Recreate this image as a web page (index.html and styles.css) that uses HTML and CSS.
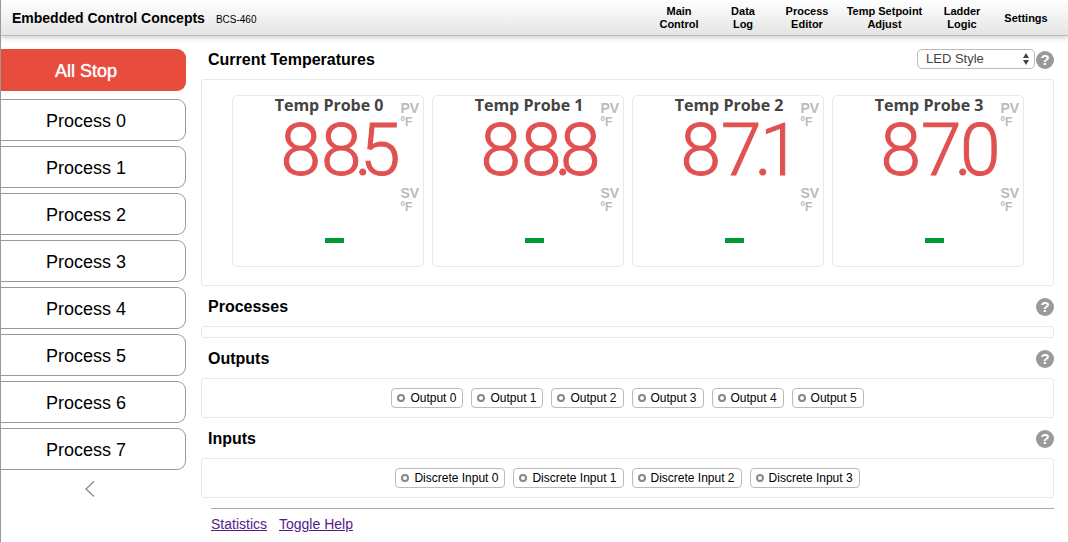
FILE: index.html
```html
<!DOCTYPE html>
<html lang="en">
<head>
<meta charset="utf-8">
<meta name="viewport" content="width=device-width, initial-scale=1">
<title>Embedded Control Concepts BCS-460</title>
<link rel="stylesheet" href="styles.css">
</head>
<body>
<header class="topbar">
  <div class="brand"><strong class="brand-name">Embedded Control Concepts</strong><span class="brand-model">BCS-460</span></div>
  <nav class="topnav">
    <a href="#main">Main<br>Control</a>
    <a href="#log">Data<br>Log</a>
    <a href="#editor">Process<br>Editor</a>
    <a class="wide" href="#setpoint">Temp Setpoint<br>Adjust</a>
    <a href="#ladder">Ladder<br>Logic</a>
    <a href="#settings">Settings</a>
  </nav>
</header>
<div class="layout">
  <aside class="sidebar">
    <button class="side-btn stop" type="button">All Stop</button>
    <div class="processes">
      <button class="side-btn" type="button">Process 0</button>
      <button class="side-btn" type="button">Process 1</button>
      <button class="side-btn" type="button">Process 2</button>
      <button class="side-btn" type="button">Process 3</button>
      <button class="side-btn" type="button">Process 4</button>
      <button class="side-btn" type="button">Process 5</button>
      <button class="side-btn" type="button">Process 6</button>
      <button class="side-btn" type="button">Process 7</button>
    </div>
    <button class="collapse" type="button" aria-label="Collapse sidebar"><svg width="10" height="16" viewBox="0 0 10 16"><path d="M9 .5 1 8l8 7.500" fill="none" stroke="#888" stroke-width="1.300"/></svg></button>
  </aside>
  <main class="content">
    <section>
      <div class="section-head">
        <h2>Current Temperatures</h2>
        <div class="tools">
          <span class="select-wrap">
            <select class="style-select" aria-label="Display style"><option>LED Style</option></select>
            <svg class="arrows" width="6" height="12" viewBox="0 0 6 12"><path d="M3 0 6 5H0zM3 12 0 7h6z" fill="#444"/></svg>
          </span>
          <button class="help" type="button" aria-label="Help">?</button>
        </div>
      </div>
      <div class="panel probes">
        <article class="probe">
          <div class="readout"><h3>Temp Probe 0</h3><div class="pv">88<span class="dot">.</span>5</div><div class="sv"></div></div>
          <div class="units"><div><b>PV</b><span>ºF</span></div><div><b>SV</b><span>ºF</span></div></div>
        </article>
        <article class="probe">
          <div class="readout"><h3>Temp Probe 1</h3><div class="pv">88<span class="dot">.</span>8</div><div class="sv"></div></div>
          <div class="units"><div><b>PV</b><span>ºF</span></div><div><b>SV</b><span>ºF</span></div></div>
        </article>
        <article class="probe">
          <div class="readout"><h3>Temp Probe 2</h3><div class="pv">87<span class="dot">.</span>1</div><div class="sv"></div></div>
          <div class="units"><div><b>PV</b><span>ºF</span></div><div><b>SV</b><span>ºF</span></div></div>
        </article>
        <article class="probe">
          <div class="readout"><h3>Temp Probe 3</h3><div class="pv">87<span class="dot">.</span>0</div><div class="sv"></div></div>
          <div class="units"><div><b>PV</b><span>ºF</span></div><div><b>SV</b><span>ºF</span></div></div>
        </article>
      </div>
    </section>
    <section>
      <div class="section-head"><h2>Processes</h2><button class="help" type="button" aria-label="Help">?</button></div>
      <div class="panel empty"></div>
    </section>
    <section>
      <div class="section-head"><h2>Outputs</h2><button class="help" type="button" aria-label="Help">?</button></div>
      <div class="panel chips">
        <button class="chip" type="button"><i class="led"></i>Output 0</button>
        <button class="chip" type="button"><i class="led"></i>Output 1</button>
        <button class="chip" type="button"><i class="led"></i>Output 2</button>
        <button class="chip" type="button"><i class="led"></i>Output 3</button>
        <button class="chip" type="button"><i class="led"></i>Output 4</button>
        <button class="chip" type="button"><i class="led"></i>Output 5</button>
      </div>
    </section>
    <section>
      <div class="section-head"><h2>Inputs</h2><button class="help" type="button" aria-label="Help">?</button></div>
      <div class="panel chips">
        <button class="chip" type="button"><i class="led"></i>Discrete Input 0</button>
        <button class="chip" type="button"><i class="led"></i>Discrete Input 1</button>
        <button class="chip" type="button"><i class="led"></i>Discrete Input 2</button>
        <button class="chip" type="button"><i class="led"></i>Discrete Input 3</button>
      </div>
    </section>
    <footer class="footer"><a href="#statistics">Statistics</a><a href="#help">Toggle Help</a></footer>
  </main>
</div>
</body>
</html>
```
FILE: styles.css
```css
* { box-sizing: border-box; }
body {
  margin: 0;
  min-height: 100vh;
  border-left: 1px solid #999;
  background: #fff;
  color: #000;
  font-family: "Liberation Sans", Arial, sans-serif;
}
button { margin: 0; padding: 0; font-family: inherit; color: inherit; }
h2, h3 { margin: 0; }

.topbar {
  display: flex;
  justify-content: space-between;
  align-items: center;
  height: 36px;
  padding: 1px 10px 0 11px;
  border-bottom: 1px solid #bbb;
  background: linear-gradient(#fff, #e4e4e4);
  box-shadow: 0 1px 6px rgba(0, 0, 0, 0.25);
}
.brand { display: flex; align-items: baseline; gap: 11px; }
.brand-name { font-size: 14px; }
.brand-model { font-size: 10px; }
.topnav { display: flex; align-items: center; }
.topnav a {
  min-width: 64px;
  color: #000;
  font-size: 11px;
  font-weight: bold;
  line-height: 13px;
  text-align: center;
  text-decoration: none;
}
.topnav .wide { min-width: 91px; }

.layout { display: flex; padding-top: 3px; }
.sidebar { flex: none; width: 185px; padding-top: 10px; }
.processes { display: flex; flex-direction: column; gap: 5px; margin-top: 8px; }
.side-btn {
  display: block;
  width: 100%;
  height: 42px;
  padding: 2px 14px 0 0;
  border: 1px solid #999;
  border-left: 0;
  border-radius: 0 9px 9px 0;
  background: #fff;
  font-size: 18px;
}
.stop { border-color: #e84c3d; background: #e84c3d; color: #fff; text-shadow: 0 0 1px #fff; }
.collapse {
  display: flex;
  justify-content: center;
  width: 178px;
  padding-top: 11px;
  border: 0;
  background: none;
}

.content { flex: 1; min-width: 0; margin: 0 14px 0 15px; }
.section-head {
  display: flex;
  justify-content: space-between;
  align-items: center;
  height: 40px;
  padding: 2px 0 0 7px;
}
.section-head h2 { font-size: 16px; line-height: 20px; }
.tools { display: flex; align-items: center; gap: 1px; }
.select-wrap { position: relative; display: flex; padding-bottom: 2px; }
.style-select {
  appearance: none;
  width: 118px;
  height: 20px;
  padding: 0 18px 2px 8px;
  border: 1px solid #bbb;
  border-radius: 5px;
  background: #fff;
  color: #444;
  font: 13px "Liberation Sans", Arial, sans-serif;
}
.arrows { position: absolute; top: 4px; right: 6px; pointer-events: none; }
.help {
  width: 18px;
  height: 18px;
  border: 0;
  border-radius: 50%;
  background: #999;
  color: #fff;
  font-size: 15px;
  font-weight: bold;
  line-height: 18px;
}

.panel { border: 1px solid #e8e8e8; border-radius: 3px; }
.probes { display: flex; flex-wrap: wrap; justify-content: center; gap: 8px; padding: 15px 0 18px; }
.probe {
  display: flex;
  width: 192px;
  height: 172px;
  border: 1px solid #e8e8e8;
  border-radius: 5px;
}
.readout { flex: none; width: 168px; text-align: right; }
.readout h3 {
  padding-right: 17px;
  color: #444;
  font: 700 16px/18px "Open Sans", sans-serif;
}
.pv {
  color: #e05252;
  font: 300 73px/72px Roboto, sans-serif;
  -webkit-text-stroke: 1px #e05252;
}
.dot { margin: 0 -12px 0 -7px; }
.sv { width: 19px; height: 5px; margin: 52px 57px 0 auto; background: #093; }
.units { display: flex; flex-direction: column; gap: 57px; padding-top: 5px; color: #bbb; }
.units b, .units span { display: block; line-height: 14px; }
.units b { font-size: 14px; }
.units span { font-size: 12px; font-weight: bold; }
.empty { height: 12px; }
.chips { display: flex; flex-wrap: wrap; justify-content: center; gap: 8px; padding: 9px 0; }
.chip {
  display: flex;
  align-items: center;
  gap: 5px;
  height: 20px;
  padding: 0 6px 0 5px;
  border: 1px solid #bbb;
  border-radius: 4px;
  background: #fff;
  font-size: 12px;
}
.led { width: 8px; height: 8px; border: 2px solid #888; border-radius: 50%; }

.footer {
  display: flex;
  gap: 12px;
  margin: 10px 0 0 10px;
  padding-top: 7px;
  border-top: 1px solid #aaa;
  font-size: 14px;
}
.footer a { color: #551a8b; }
```
